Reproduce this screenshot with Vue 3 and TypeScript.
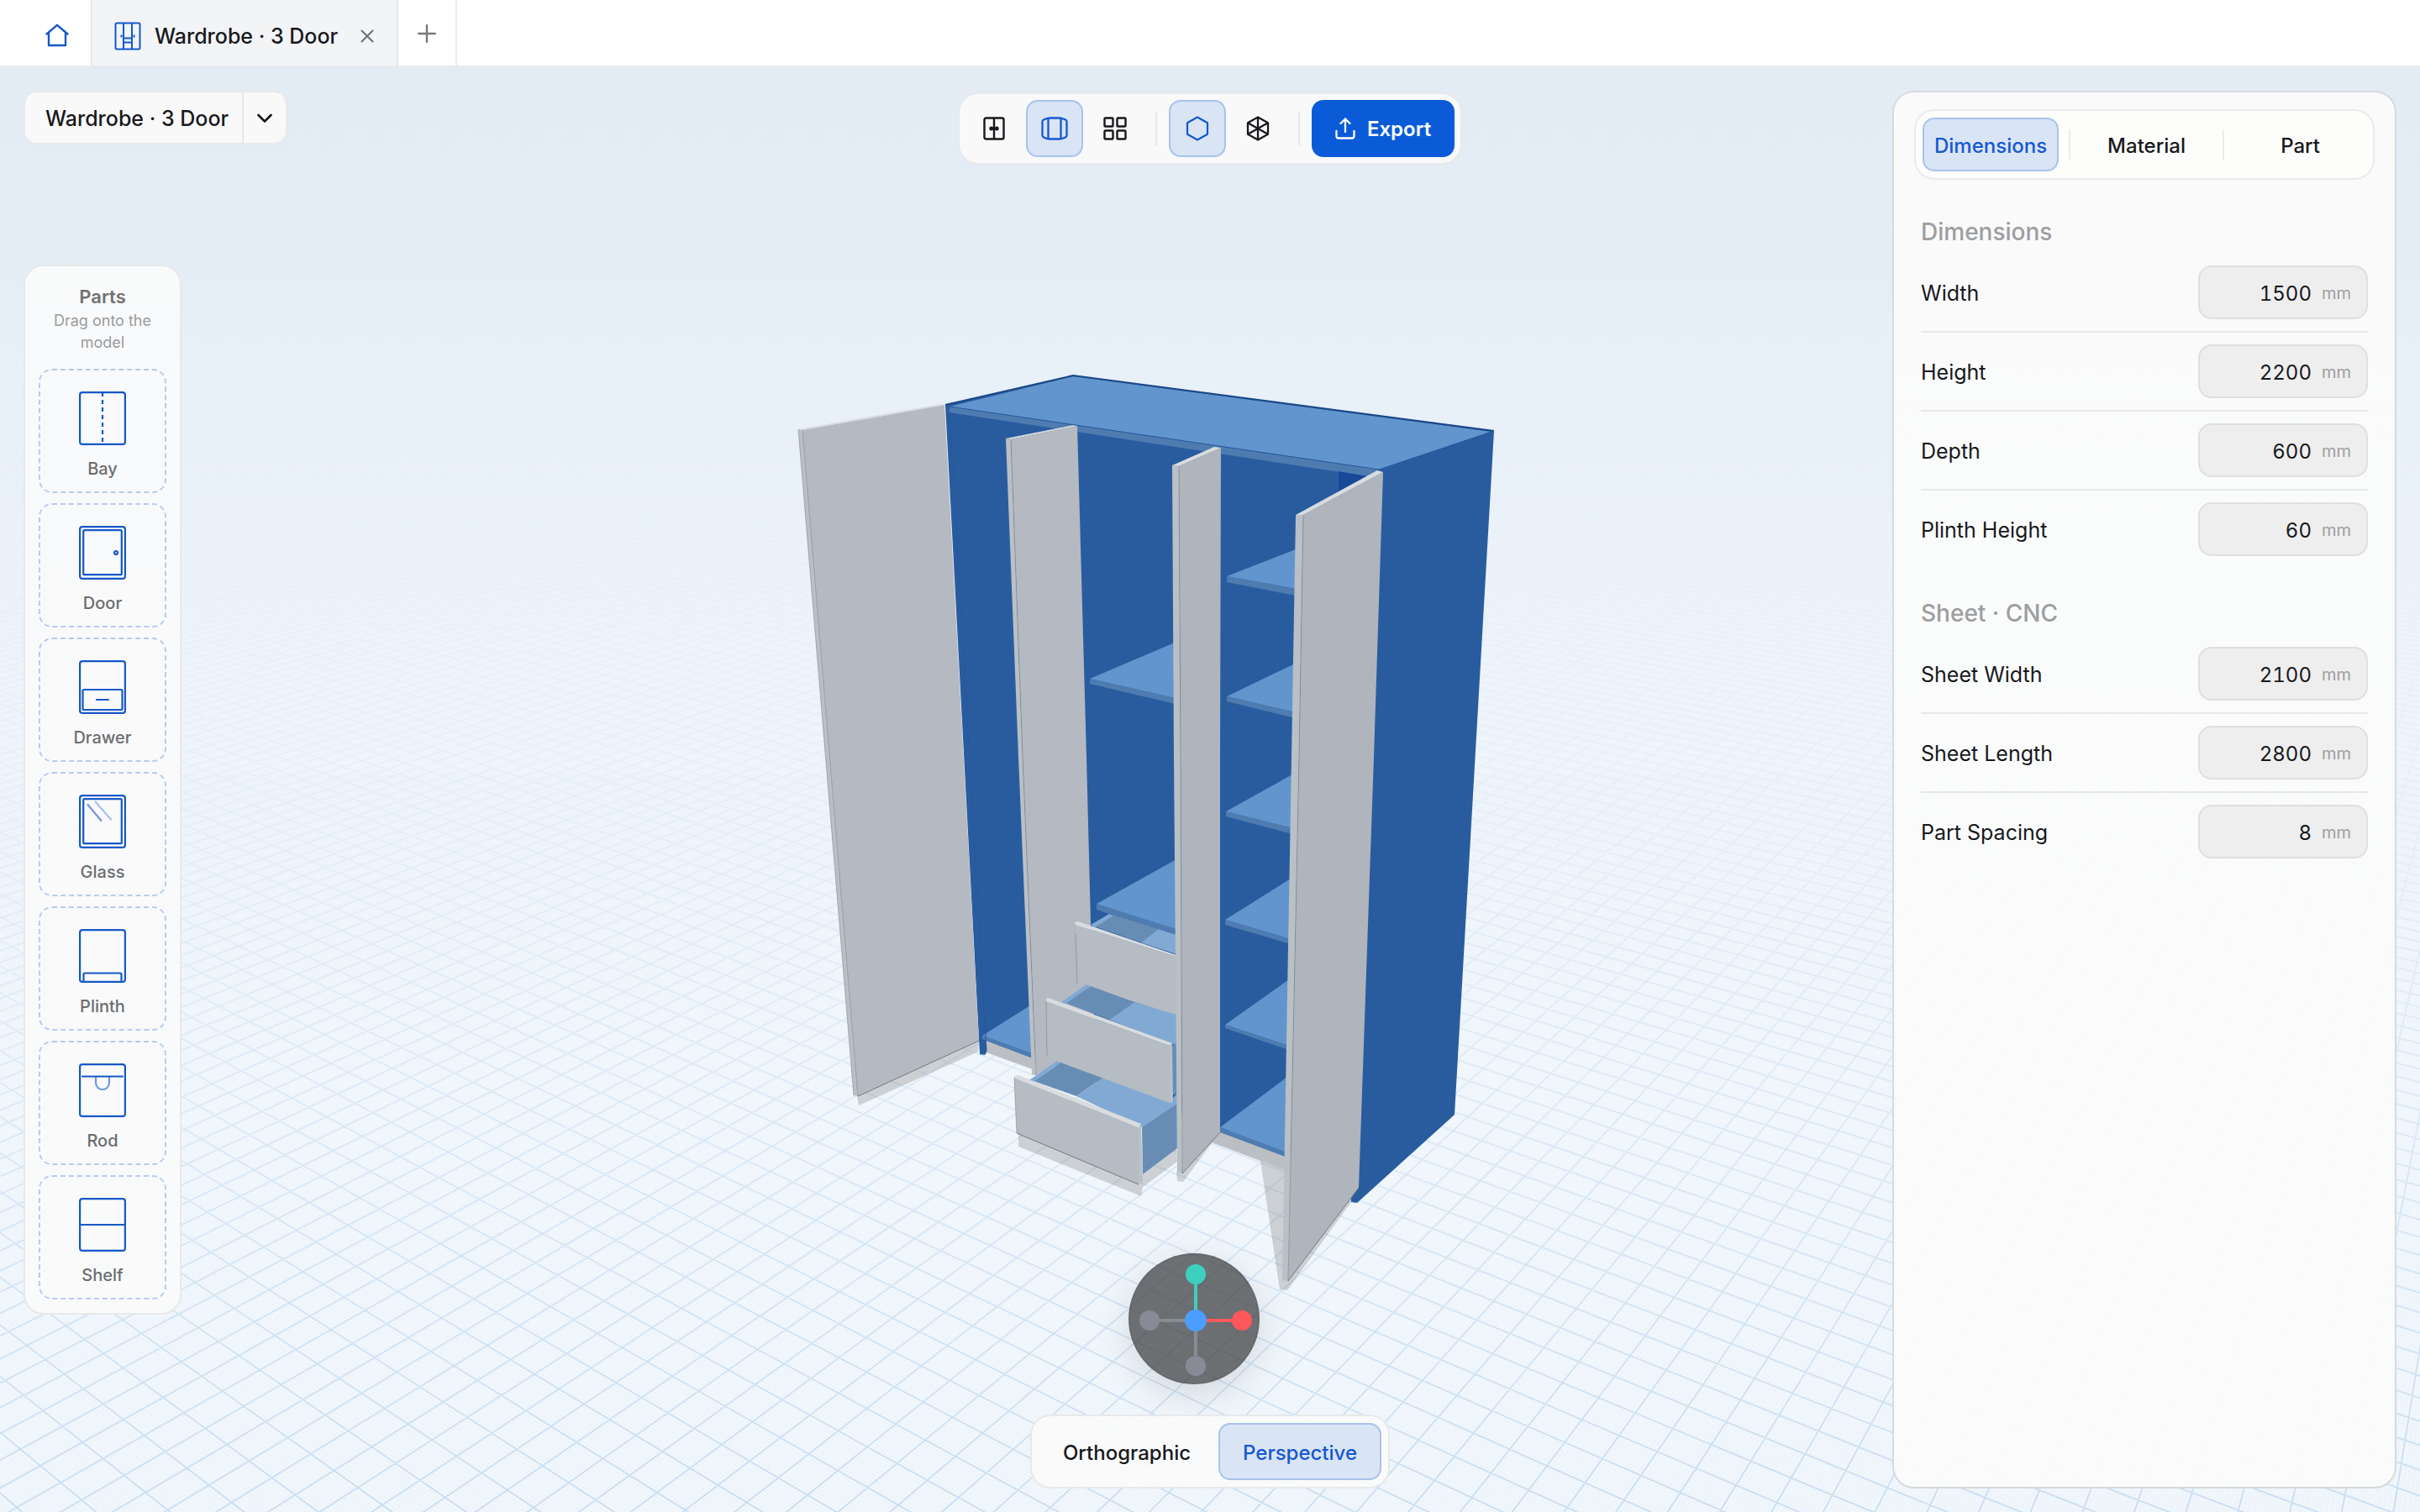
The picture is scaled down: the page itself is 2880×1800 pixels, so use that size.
<script setup lang="ts">
import { computed, ref } from 'vue'

interface Field {
  id: string
  label: string
  value: string
}

interface Section {
  title: string
  fields: Field[]
}

type Kind =
  | 'panel' | 'top' | 'lip' | 'deep' | 'faceLeft' | 'faceRight' | 'edge' | 'rim'
  | 'front' | 'tray' | 'trayDark' | 'plinth' | 'shade'

interface Shape {
  kind: Kind
  points: string
}

const panelTabs = ['Dimensions', 'Material', 'Part']
const activeTab = ref('Dimensions')
const projections = ['Orthographic', 'Perspective']
const projection = ref('Perspective')
const parts = ['Bay', 'Door', 'Drawer', 'Glass', 'Plinth', 'Rod', 'Shelf']

const sections = ref<Section[]>([
  {
    title: 'Dimensions',
    fields: [
      { id: 'width', label: 'Width', value: '1500' },
      { id: 'height', label: 'Height', value: '2200' },
      { id: 'depth', label: 'Depth', value: '600' },
      { id: 'plinth-height', label: 'Plinth Height', value: '60' },
    ],
  },
  {
    title: 'Sheet · CNC',
    fields: [
      { id: 'sheet-width', label: 'Sheet Width', value: '2100' },
      { id: 'sheet-length', label: 'Sheet Length', value: '2800' },
      { id: 'part-spacing', label: 'Part Spacing', value: '8' },
    ],
  },
])

/* Camera looking at the cabinet: 42 degree lens, 22 degrees down, 35 degrees round. */
const FOCAL = 2243
const CENTER_X = 1440
const CENTER_Y = 939
const EYE_HEIGHT = 3244
const EYE_DISTANCE = 5422
const PITCH = (22.06 * Math.PI) / 180
const YAW = (35 * Math.PI) / 180

function project(across: number, ahead: number): string {
  const depth = ahead * Math.cos(PITCH) + EYE_HEIGHT * Math.sin(PITCH)
  const drop = EYE_HEIGHT * Math.cos(PITCH) - ahead * Math.sin(PITCH)
  const x = CENTER_X + (FOCAL * across) / depth
  const y = CENTER_Y + (FOCAL * drop) / depth
  return `${x.toFixed(1)} ${y.toFixed(1)}`
}

/* Floor lines every `step` millimetres, cut between two distances from the eye. */
function gridPath(step: number, far: number): string {
  const near = 3300
  const reach = far * 0.66
  const c = Math.cos(YAW)
  const s = Math.sin(YAW)
  const out: string[] = []
  const limit = Math.ceil((far * 1.1) / step)
  for (let i = -limit; i <= limit; i++) {
    const k = i * step
    const alongZ = [near, far].map((b) => {
      const z = (b - EYE_DISTANCE + s * k) / c
      return { a: c * k + s * z, b }
    })
    const alongX = [near, far].map((b) => {
      const x = (c * k - (b - EYE_DISTANCE)) / s
      return { a: c * x + s * k, b }
    })
    for (const [p, q] of [alongZ, alongX]) {
      const outside =
        (p.a > reach && q.a > reach) || (p.a < -reach && q.a < -reach)
      if (!outside) out.push(`M${project(p.a, p.b)}L${project(q.a, q.b)}`)
    }
  }
  return out.join('')
}

const majorGrid = computed(() => gridPath(100, 18000))
const minorGrid = computed(() => gridPath(10, 8200))

const shapes: Shape[] = [
  { kind: 'shade', points: '1020,1303 1022,1315 1164,1251 1165,1238' },
  { kind: 'shade', points: '1212,1348 1355,1407 1360,1397 1400,1366 1401,1382 1360,1412 1358,1423 1212,1364' },
  { kind: 'shade', points: '1400,1394 1401,1405 1408,1406 1443,1359 1451,1347' },
  { kind: 'shade', points: '1500,1381 1528,1391 1617,1413 1608,1430 1532,1535 1523,1534' },
  { kind: 'plinth', points: '1174,1238 1229,1257 1229,1272 1174,1252' },
  { kind: 'plinth', points: '1450,1345 1532,1374 1532,1393 1442,1359' },
  { kind: 'panel', points: '1125,481 1277,446 1778,512 1731,1326 1615,1431 1608,1430 1608,1400 1174,1238 1174,1252 1172,1255 1166,1254' },
  { kind: 'top', points: '1130,483 1277,447 1775,513 1641,558' },
  { kind: 'lip', points: '1130,483 1641,558 1628,566 1130,490' },
  { kind: 'deep', points: '1593,560 1628,566 1593,584' },
  { kind: 'top', points: '1169,1232 1226,1196 1229,1254' },
  { kind: 'lip', points: '1169,1232 1229,1253 1229,1259 1169,1236' },
  { kind: 'top', points: '1297,807 1398,764 1398,830' },
  { kind: 'lip', points: '1297,807 1398,830 1398,837 1297,813' },
  { kind: 'top', points: '1460,685 1542,653 1542,700' },
  { kind: 'lip', points: '1460,685 1542,700 1542,708 1460,692' },
  { kind: 'top', points: '1460,828 1541,789 1541,847' },
  { kind: 'lip', points: '1460,828 1541,847 1541,854 1460,834' },
  { kind: 'top', points: '1459,965 1538,921 1538,985' },
  { kind: 'lip', points: '1459,965 1538,985 1538,992 1459,971' },
  { kind: 'top', points: '1458,1094 1536,1045 1536,1117' },
  { kind: 'lip', points: '1458,1094 1536,1117 1536,1123 1458,1100' },
  { kind: 'top', points: '1458,1219 1534,1165 1534,1244' },
  { kind: 'lip', points: '1458,1219 1534,1244 1534,1249 1458,1223' },
  { kind: 'top', points: '1452,1341 1532,1281 1532,1372' },
  { kind: 'lip', points: '1452,1341 1532,1371 1532,1377 1452,1347' },
  { kind: 'faceLeft', points: '955,511 1124,481 1165,1238 1021,1304' },
  { kind: 'edge', points: '950,510 955,511 1021,1304 1016,1303' },
  { kind: 'rim', points: '950,510 1120,480 1124,481 955,511' },
  { kind: 'faceLeft', points: '1203,522 1282,506 1293,900 1298,1098 1303,1240 1233,1279 1217,900' },
  { kind: 'edge', points: '1197,521 1203,522 1217,900 1233,1279 1228,1278 1212,900' },
  { kind: 'rim', points: '1197,521 1278,505 1282,506 1203,522' },
  { kind: 'trayDark', points: '1303,1102 1325,1088 1380,1104 1358,1121' },
  { kind: 'tray', points: '1358,1121 1380,1104 1400,1110 1400,1135' },
  { kind: 'tray', points: '1298,1100 1320,1087 1325,1089 1303,1103' },
  { kind: 'top', points: '1305,1075 1400,1022 1400,1106' },
  { kind: 'lip', points: '1305,1075 1400,1105 1400,1112 1305,1082' },
  { kind: 'front', points: '1280,1100 1400,1138 1400,1208 1282,1170' },
  { kind: 'rim', points: '1279,1097 1283,1096 1400,1136 1400,1138 1280,1100' },
  { kind: 'trayDark', points: '1268,1193 1298,1173 1350,1192 1320,1213' },
  { kind: 'tray', points: '1320,1213 1350,1192 1400,1207 1400,1243 1393,1241' },
  { kind: 'tray', points: '1263,1192 1293,1171 1298,1173 1268,1194' },
  { kind: 'trayDark', points: '1395,1244 1401,1239 1401,1300 1395,1303' },
  { kind: 'trayDark', points: '1230,1286 1263,1264 1312,1282 1281,1304' },
  { kind: 'tray', points: '1281,1304 1312,1282 1392,1311 1401,1300 1401,1314 1359,1341 1353,1338' },
  { kind: 'tray', points: '1225,1285 1258,1262 1263,1264 1230,1287' },
  { kind: 'front', points: '1245,1191 1392,1244 1392,1312 1246,1258' },
  { kind: 'rim', points: '1245,1188 1248,1187 1395,1241 1392,1244 1245,1191' },
  { kind: 'edge', points: '1392,1244 1395,1241 1396,1311 1392,1312' },
  { kind: 'trayDark', points: '1359,1341 1401,1313 1401,1366 1360,1397' },
  { kind: 'front', points: '1207,1282 1355,1341 1355,1409 1210,1348' },
  { kind: 'rim', points: '1207,1280 1212,1279 1358,1337 1355,1341 1207,1282' },
  { kind: 'edge', points: '1355,1341 1358,1338 1360,1406 1355,1409' },
  { kind: 'faceRight', points: '1403,554 1453,532 1452,900 1452,1347 1407,1396 1405,900' },
  { kind: 'edge', points: '1395,553 1403,554 1405,900 1407,1396 1401,1395 1397,900' },
  { kind: 'rim', points: '1395,553 1445,531 1453,532 1403,554' },
  { kind: 'faceRight', points: '1551,612 1646,561 1635,900 1617,1413 1533,1524 1546,900' },
  { kind: 'edge', points: '1542,612 1551,612 1546,900 1533,1524 1526,1523 1537,900' },
  { kind: 'rim', points: '1542,612 1639,559 1646,561 1551,612' },
]
</script>

<template>
  <div class="app">
    <header class="tabbar">
      <button class="home" type="button" aria-label="Home">
        <svg width="28" height="28" viewBox="0 0 28 28" fill="none" stroke="currentColor" stroke-width="2.4" stroke-linejoin="round" stroke-linecap="round">
          <path d="M1.5 12.5 14 1.8l12.500 10.700M4 10.500V26h20V10.500" />
        </svg>
      </button>
      <div class="doc-tab">
        <svg class="doc-icon" width="32" height="34" viewBox="0 0 32 34" fill="none" stroke="currentColor" stroke-width="2">
          <rect x="1.500" y="1.500" width="29" height="31" rx="1.500" />
          <path d="M11 1.500v31M21 1.500v31M11 19.500h10M11 24.500h10M8.500 15.500v3M23.500 15.500v3" />
        </svg>
        <span>Wardrobe · 3 Door</span>
        <button class="close" type="button" aria-label="Close tab">
          <svg width="16" height="16" viewBox="0 0 16 16" fill="none" stroke="currentColor" stroke-width="2" stroke-linecap="round"><path d="M1.500 1.500l13 13M14.500 1.500l-13 13" /></svg>
        </button>
      </div>
      <button class="new-tab" type="button" aria-label="New tab">
        <svg width="22" height="22" viewBox="0 0 22 22" fill="none" stroke="currentColor" stroke-width="2.400" stroke-linecap="round"><path d="M11 1.200v19.600M1.200 11h19.600" /></svg>
      </button>
    </header>

    <main class="stage">
      <svg class="scene" viewBox="0 78 2880 1722" preserveAspectRatio="xMidYMid slice" role="img" aria-label="Wardrobe model">
        <defs>
          <linearGradient id="fade" x1="0" y1="0" x2="0" y2="1">
            <stop offset="0.200" stop-color="#fff" stop-opacity="0" />
            <stop offset="0.350" stop-color="#fff" stop-opacity="0.070" />
            <stop offset="0.550" stop-color="#fff" stop-opacity="0.300" />
            <stop offset="0.750" stop-color="#fff" stop-opacity="0.620" />
            <stop offset="1" stop-color="#fff" stop-opacity="1" />
          </linearGradient>
          <mask id="floor-fade" maskUnits="userSpaceOnUse" x="0" y="78" width="2880" height="1722">
            <rect x="0" y="78" width="2880" height="1722" fill="url(#fade)" />
          </mask>
        </defs>
        <g mask="url(#floor-fade)" fill="none">
          <path class="minor" :d="minorGrid" />
          <path class="major" :d="majorGrid" />
        </g>
        <polygon v-for="(shape, i) in shapes" :key="i" :class="shape.kind" :points="shape.points" />
        <g class="outline">
          <path class="dark" d="M1125 481 1277 446 1778 512" />
          <path class="soft" d="M1641 558 1778 512M1130 483 1641 558" />
          <path class="soft" d="M1130 490 1174 1250" />
          <path class="hair" d="M1021 1304 1165 1238M1407 1396 1452 1347M1533 1524 1617 1413M1210 1348 1355 1409" />
          <path class="hair faint" d="M955 511 1021 1304M1203 522 1217 900 1233 1279M1403 554 1405 900 1407 1396M1551 612 1546 900 1533 1524M950 510 1016 1303M1280 1110 1282 1170M1245 1191 1246 1257M1207 1282 1210 1348" />
        </g>
      </svg>

      <div class="hud">
        <div class="left">
          <div class="model-switch card">
            <button class="model-name" type="button">Wardrobe · 3 Door</button>
            <button class="model-more" type="button" aria-label="Choose model">
              <svg width="18" height="12" viewBox="0 0 18 12" fill="none" stroke="currentColor" stroke-width="2.600" stroke-linecap="round" stroke-linejoin="round"><path d="M1.500 2 9 9.500 16.500 2" /></svg>
            </button>
          </div>

          <aside class="parts card">
            <h2>Parts</h2>
            <p>Drag onto the model</p>
            <ul>
              <li v-for="part in parts" :key="part">
                <button class="part" type="button">
                  <svg width="56" height="64" viewBox="0 0 56 64" fill="none" stroke="currentColor" stroke-width="2.200" stroke-linecap="round">
                    <rect x="1.100" y="1.100" width="53.800" height="61.800" rx="3" />
                    <path v-if="part === 'Bay'" d="M28 1v62" stroke-dasharray="5 4" stroke-linecap="butt" />
                    <template v-else-if="part === 'Door'">
                      <rect x="5.200" y="5.200" width="45.600" height="53" rx="1.500" />
                      <circle cx="44" cy="32" r="2" />
                    </template>
                    <template v-else-if="part === 'Drawer'">
                      <rect x="4.500" y="35" width="47" height="24" rx="1.500" />
                      <path d="M21 47h14" />
                    </template>
                    <template v-else-if="part === 'Glass'">
                      <rect x="5.200" y="5.200" width="45.600" height="53" rx="1.500" />
                      <path d="M10.500 12 26.500 31" opacity="0.600" />
                      <path d="M19.500 8.500 38 29.500" opacity="0.350" />
                    </template>
                    <path v-else-if="part === 'Plinth'" d="M5.500 62.500V54q0-1.500 1.500-1.500h42q1.500 0 1.500 1.500v8.500" />
                    <template v-else-if="part === 'Rod'">
                      <path d="M4 15.500h48" />
                      <path d="M20 16v7a8 8 0 0 0 16 0v-7" opacity="0.600" />
                    </template>
                    <path v-else d="M1 32h54" />
                  </svg>
                  <span>{{ part }}</span>
                </button>
              </li>
            </ul>
          </aside>
        </div>

        <div class="middle">
          <nav class="toolbar card" aria-label="View tools">
            <button class="tool" type="button" aria-label="Doors closed">
              <svg width="26" height="28" viewBox="0 0 26 28" fill="none" stroke="currentColor" stroke-width="2.400">
                <rect x="1.500" y="1.500" width="23" height="25" rx="2" />
                <path d="M13 1.500v25" />
                <circle cx="9.800" cy="14" r="1.300" fill="currentColor" />
                <circle cx="16.200" cy="14" r="1.300" fill="currentColor" />
              </svg>
            </button>
            <button class="tool on" type="button" aria-label="Doors open">
              <svg width="32" height="28" viewBox="0 0 32 28" fill="none" stroke="currentColor" stroke-width="2.300" stroke-linejoin="round">
                <rect x="8.500" y="1.500" width="15" height="25" rx="1" />
                <path d="M8.500 1.500 3.300 3.300Q1.500 4 1.500 6v16q0 2 1.800 2.700l5.200 1.800M23.500 1.500l5.200 1.800q1.800.7 1.800 2.700v16q0 2-1.800 2.700l-5.200 1.800" />
              </svg>
            </button>
            <button class="tool" type="button" aria-label="Exploded parts">
              <svg width="28" height="28" viewBox="0 0 28 28" fill="none" stroke="currentColor" stroke-width="2.400">
                <rect x="1.500" y="1.500" width="10" height="10" rx="1" />
                <rect x="16.500" y="1.500" width="10" height="10" rx="1" />
                <rect x="1.500" y="16.500" width="10" height="10" rx="1" />
                <rect x="16.500" y="16.500" width="10" height="10" rx="1" />
              </svg>
            </button>
            <span class="rule"></span>
            <button class="tool on" type="button" aria-label="Solid">
              <svg width="28" height="30" viewBox="0 0 28 30" fill="none" stroke="currentColor" stroke-width="2.200" stroke-linejoin="round"><path d="M14 1.500 26 8.200v13.600L14 28.500 2 21.800V8.200z" /></svg>
            </button>
            <button class="tool" type="button" aria-label="Wireframe">
              <svg width="28" height="30" viewBox="0 0 28 30" fill="none" stroke="currentColor" stroke-width="2.300" stroke-linejoin="round"><path d="M14 1.500 26 8.200v13.600L14 28.500 2 21.800V8.200zM14 1.500v27M2 8.200l24 13.600M26 8.200 2 21.800" /></svg>
            </button>
            <span class="rule"></span>
            <button class="export" type="button">
              <svg width="24" height="26" viewBox="0 0 24 26" fill="none" stroke="currentColor" stroke-width="2.300" stroke-linecap="round" stroke-linejoin="round"><path d="M12 17V1.500M6.500 7 12 1.500 17.500 7M1.500 16v6q0 2.500 2.500 2.500h16q2.500 0 2.500-2.500v-6" /></svg>
              Export
            </button>
          </nav>

          <div class="bottom">
            <button class="gizmo" type="button" aria-label="Orientation">
              <svg width="148" height="148" viewBox="-74 -74 148 148" stroke-width="4">
                <path d="M-42 2H2M2 2v42" stroke="#888b93" />
                <path d="M2 2v-44" stroke="#43cdbd" />
                <path d="M2 2h44" stroke="#ff5a5f" />
                <circle cx="2" cy="-53" r="12" fill="#3ed0bf" />
                <circle cx="57" cy="2" r="12" fill="#ff575c" />
                <circle cx="-53" cy="2" r="12" fill="#888b95" />
                <circle cx="2" cy="56" r="12" fill="#888b95" />
                <circle cx="2" cy="2" r="13" fill="#4b9eff" />
              </svg>
            </button>
            <div class="projection card">
              <button v-for="item in projections" :key="item" type="button" :class="{ on: item === projection }" @click="projection = item">{{ item }}</button>
            </div>
          </div>
        </div>

        <div class="right">
          <form class="inspector" @submit.prevent>
            <div class="tabs">
              <template v-for="(tab, i) in panelTabs" :key="tab">
                <span v-if="i > 0" class="tab-rule"></span>
                <button type="button" :class="{ on: tab === activeTab }" @click="activeTab = tab">{{ tab }}</button>
              </template>
            </div>
            <section v-for="section in sections" :key="section.title">
              <h3>{{ section.title }}</h3>
              <div v-for="field in section.fields" :key="field.id" class="row">
                <label :for="field.id">{{ field.label }}</label>
                <div class="value">
                  <input :id="field.id" v-model="field.value" type="text" inputmode="numeric" />
                  <span>mm</span>
                </div>
              </div>
            </section>
          </form>
        </div>
      </div>
    </main>
  </div>
</template>

<style>
body {
  margin: 0;
}
</style>

<style scoped>
.app {
  display: flex;
  flex-direction: column;
  height: 100vh;
  font-family: Inter, "Liberation Sans", sans-serif;
  font-size: 25px;
  color: #17191c;
}

.app * {
  box-sizing: border-box;
}

button {
  font: inherit;
  color: inherit;
  background: none;
  border: 0;
  padding: 0;
  display: flex;
  align-items: center;
  justify-content: center;
  cursor: pointer;
}

h2,
h3,
p,
ul {
  margin: 0;
  padding: 0;
  list-style: none;
}

/* Document tabs */
.tabbar {
  flex: none;
  display: flex;
  height: 80px;
  background: #fff;
  border-bottom: 2px solid #e8eaed;
  font-weight: 500;
}

.home {
  width: 108px;
  padding-left: 28px;
  padding-top: 6px;
  color: #1558c8;
}

.doc-tab {
  display: flex;
  align-items: center;
  gap: 16px;
  padding: 8px 16px 0 26px;
  background: #f3f4f6;
  border: solid #e6e7ea;
  border-width: 0 2px;
}

.doc-icon {
  color: #1558d0;
}

.close {
  width: 38px;
  height: 36px;
  color: #6c6e71;
}

.new-tab {
  width: 70px;
  padding-top: 2px;
  color: #77797b;
  border-right: 2px solid #ebecee;
}

/* 3D view */
.stage {
  position: relative;
  flex: 1;
  min-height: 0;
  overflow: hidden;
  background: linear-gradient(#e3ebf5, #e4ecf6 12%, #e8f0f8 22%, #eff4fb 42%, #f3f8fc 70%, #f2f7fc);
}

.scene {
  position: absolute;
  inset: 0;
  width: 100%;
  height: 100%;
}

.minor {
  stroke: #a9c8ea;
  stroke-opacity: 0.08;
  stroke-width: 1;
}

.major {
  stroke: #a4c6e9;
  stroke-opacity: 0.46;
  stroke-width: 2;
}

.panel { fill: #295c9f; }
.top { fill: #6295cd; }
.lip { fill: #4e7cb1; }
.deep { fill: #17489a; }
.faceLeft { fill: #b5b9c2; }
.faceRight { fill: #afb4bd; }
.edge { fill: #b9c0c6; }
.rim { fill: #d9dcde; }
.front { fill: #b5bcc3; }
.tray { fill: #82a9d3; }
.trayDark { fill: #688db5; }
.plinth { fill: #bbbfc3; }
.shade { fill: #6d6d6d; fill-opacity: 0.27; }

.outline {
  fill: none;
}

.dark { stroke: #1a4787; stroke-width: 2; }
.soft { stroke: #28579a; stroke-width: 1; }
.hair { stroke: #75787c; stroke-width: 1; }
.faint { stroke-opacity: 0.5; }

/* Floating controls */
.hud {
  position: absolute;
  inset: 0;
  display: grid;
  grid-template-columns: minmax(0, 1fr) auto minmax(0, 1fr);
  padding: 28px;
}

.card {
  background: rgba(251, 251, 251, 0.9);
  border: 2px solid #e7e9eb;
}

.left {
  display: grid;
  justify-items: start;
}

.left > * {
  grid-area: 1 / 1;
}

.model-switch {
  display: flex;
  align-self: start;
  height: 64px;
  border-radius: 16px;
  font-weight: 500;
}

.model-name {
  padding: 2px 16px 0 24px;
}

.model-more {
  width: 52px;
  padding-top: 2px;
  border-left: 2px solid #e4e6e9;
}

.parts {
  align-self: center;
  width: 188px;
  padding: 20px 16px 16px;
  border-radius: 24px;
  text-align: center;
}

.parts h2 {
  font-size: 22px;
  line-height: 32px;
  font-weight: 600;
  color: #707274;
}

.parts p {
  margin-bottom: 18px;
  font-size: 18px;
  line-height: 26px;
  color: #9a9c9e;
}

.parts ul {
  display: grid;
  gap: 12px;
}

.part {
  flex-direction: column;
  gap: 14px;
  width: 100%;
  height: 148px;
  padding-top: 12px;
  border: 2px dashed #b9cbed;
  border-radius: 16px;
  font-size: 20px;
  line-height: 28px;
  font-weight: 500;
  color: #1558c8;
}

.part span {
  color: #6b6d70;
}

.middle {
  display: flex;
  flex-direction: column;
  justify-content: space-between;
  align-items: center;
  padding-top: 2px;
}

.toolbar {
  display: flex;
  align-items: center;
  gap: 4px;
  padding: 7px;
  border-radius: 24px;
}

.tool {
  width: 68px;
  height: 68px;
  border-radius: 14px;
}

.on {
  color: #1558d0;
  background: #d9e4f5;
  border: 2px solid #a9c3ec;
}

.rule {
  width: 2px;
  height: 40px;
  margin: 0 10px;
  background: #e6e8ea;
}

.export {
  gap: 14px;
  width: 170px;
  height: 68px;
  border-radius: 14px;
  font-size: 24px;
  font-weight: 600;
  color: #fff;
  background: #0b5bd8;
}

.bottom {
  display: flex;
  flex-direction: column;
  align-items: center;
  gap: 36px;
}

.gizmo {
  width: 156px;
  height: 156px;
  margin-right: 38px;
  border: 2px solid rgba(90, 93, 96, 0.3);
  border-radius: 50%;
  background: rgba(52, 54, 56, 0.7);
  box-shadow: 0 12px 44px rgba(0, 0, 0, 0.12);
}

.projection {
  display: flex;
  gap: 4px;
  padding: 8px;
  border-radius: 24px;
  font-size: 24px;
  font-weight: 500;
}

.projection button {
  height: 68px;
  padding: 2px 29px 0;
  border-radius: 14px;
}

.projection .on {
  padding: 2px 27px 0;
}

/* Inspector */
.right {
  display: flex;
  justify-content: flex-end;
}

.inspector {
  width: 600px;
  padding: 20px 24px;
  border: 2px solid #d6dadf;
  border-radius: 26px;
  background: rgba(251, 251, 251, 0.94);
}

.tabs {
  display: flex;
  align-items: center;
  gap: 12px;
  height: 84px;
  margin-bottom: 44px;
  padding: 8px;
  border: 2px solid #ebebeb;
  border-radius: 24px;
  background: #fdfdfb;
  font-size: 24px;
  font-weight: 500;
}

.tabs button {
  flex: 1;
  height: 64px;
  padding: 2px 12px 0;
  border-radius: 14px;
}

.tab-rule {
  width: 2px;
  height: 36px;
  background: #ebecec;
}

section {
  padding: 0 8px;
}

section + section {
  margin-top: 36px;
}

h3 {
  margin-bottom: 8px;
  font-size: 28px;
  line-height: 36px;
  font-weight: 500;
  color: #9d9ea0;
}

.row {
  display: flex;
  align-items: center;
  justify-content: space-between;
  padding: 14px 0;
  border-bottom: 2px solid #e7e8e8;
}

.row:last-child {
  border-bottom: 0;
}

.row label {
  padding-top: 2px;
}

.value {
  display: flex;
  align-items: center;
  gap: 12px;
  width: 202px;
  height: 64px;
  padding: 2px 18px 0;
  border: 2px solid #dfdfdf;
  border-radius: 16px;
  background: #eeeeee;
}

.value input {
  flex: 1;
  min-width: 0;
  padding: 0;
  border: 0;
  outline: 0;
  background: none;
  font: inherit;
  font-size: 24px;
  font-variant-numeric: tabular-nums;
  color: inherit;
  text-align: right;
}

.value span {
  font-size: 20px;
  color: #9e9e9e;
}
</style>
